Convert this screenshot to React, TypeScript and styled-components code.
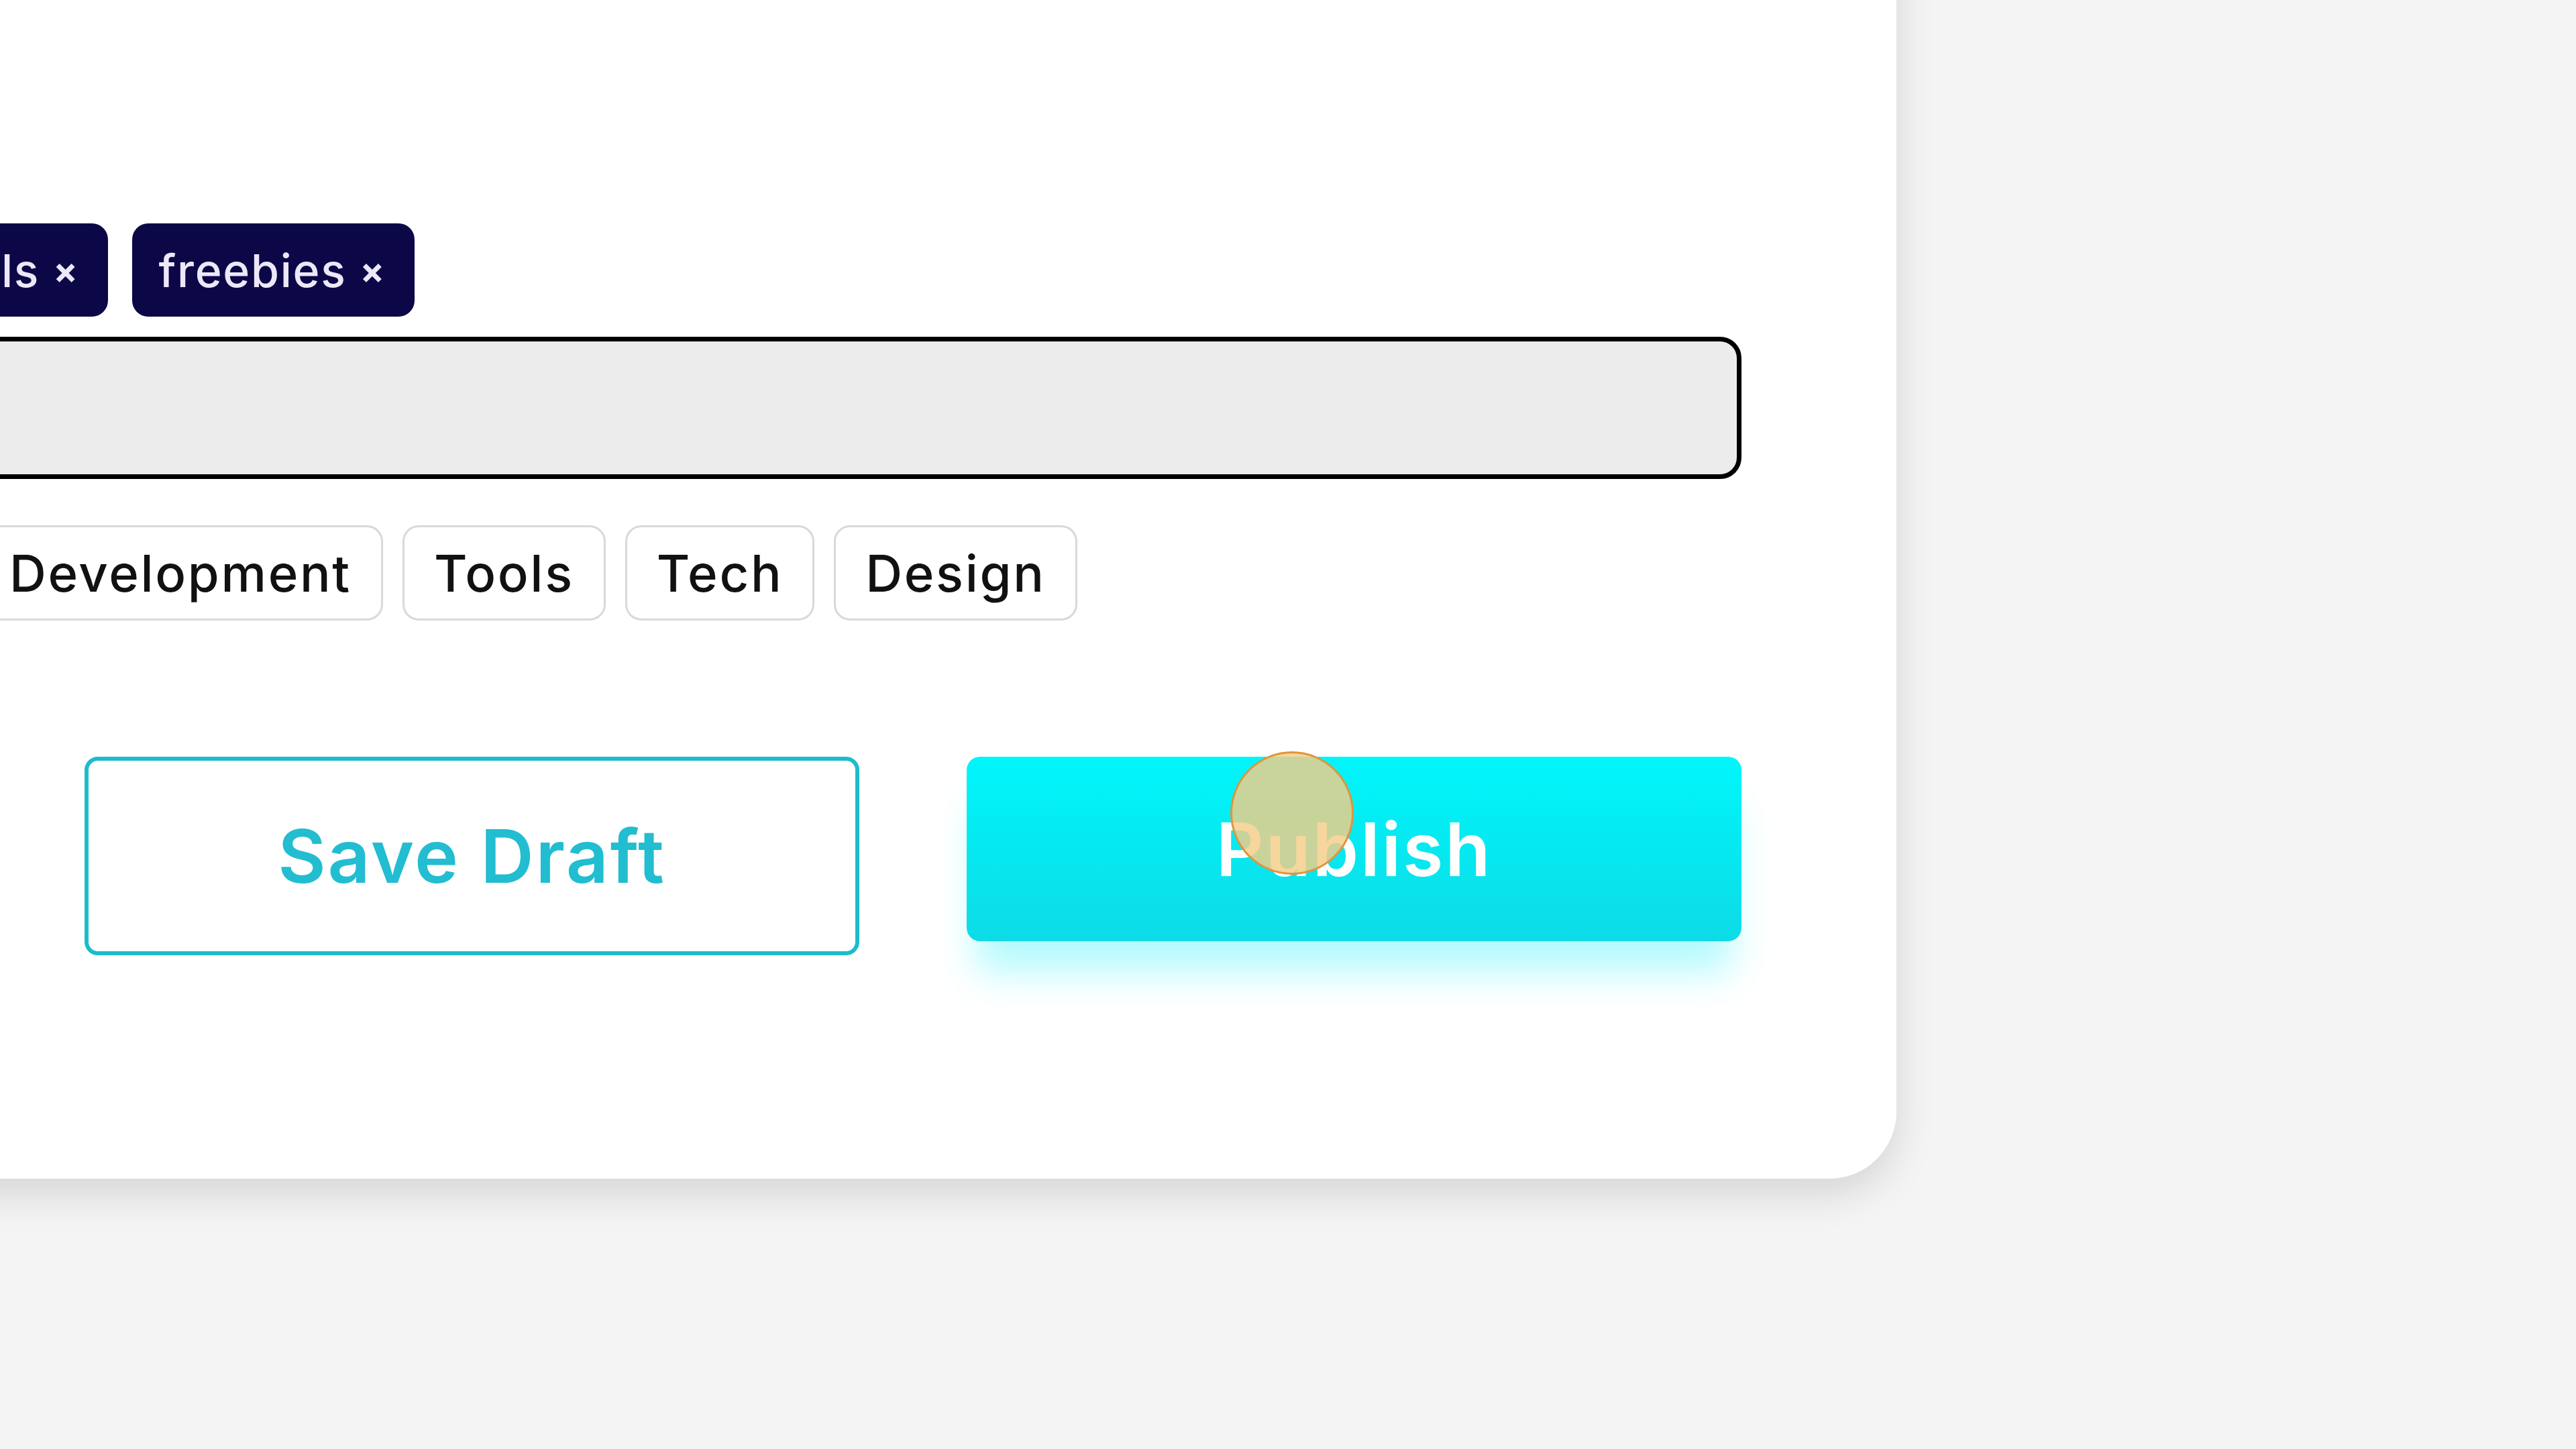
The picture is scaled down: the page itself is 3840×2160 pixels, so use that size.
import React from "react";
import styled, { createGlobalStyle } from "styled-components";

const GlobalStyle = createGlobalStyle`
  html, body {
    margin: 0;
    padding: 0;
    background: #f4f4f4;
    font-family: Inter, "Liberation Sans", sans-serif;
  }
  * {
    box-sizing: border-box;
  }
`;

const Page = styled.main`
  width: 3840px;
  height: 2160px;
  overflow: hidden;
  display: flex;
  align-items: flex-start;
`;

const Card = styled.section`
  margin-left: -400px;
  margin-top: -200px;
  width: 3227px;
  padding: 533px 231px 333px 172px;
  background: #ffffff;
  border-radius: 100px;
  box-shadow: 0 22px 60px rgba(0, 0, 0, 0.13);
  display: flex;
  flex-direction: column;
`;

const ChipRow = styled.div`
  display: flex;
  gap: 36px;
  height: 139px;
`;

const Chip = styled.span`
  display: inline-flex;
  align-items: center;
  gap: 20px;
  height: 139px;
  padding: 0 43px 0 40px;
  border-radius: 24px;
  background: #0c0848;
  color: #ece8f8;
  font-size: 68px;
  font-weight: 500;
  letter-spacing: 0.025em;
  white-space: nowrap;
`;

const ChipClose = styled.span`
  font-size: 54px;
  font-weight: 700;
  line-height: 1;
`;

const TagInput = styled.input`
  margin-top: 30px;
  height: 212px;
  width: 100%;
  border: 7px solid #000000;
  border-radius: 32px;
  background: #ececec;
  outline: none;
`;

const SuggestRow = styled.div`
  display: flex;
  gap: 29px;
  margin-top: 69px;
`;

const Suggestion = styled.button`
  height: 142px;
  padding: 0 44px;
  border: 3px solid #d9d9d9;
  border-radius: 24px;
  background: #ffffff;
  color: #111111;
  font-family: Inter, "Liberation Sans", sans-serif;
  font-size: 76px;
  font-weight: 500;
  letter-spacing: 0.035em;
  white-space: nowrap;
`;

const ActionRow = styled.div`
  display: flex;
  justify-content: flex-end;
  align-items: flex-start;
  gap: 160px;
  margin-top: 203px;
`;

const ActionButton = styled.button<{ $primary?: boolean }>`
  position: relative;
  width: 1155px;
  height: ${({ $primary }) => ($primary ? "275px" : "296px")};
  border-radius: 20px;
  font-family: Inter, "Liberation Sans", sans-serif;
  font-size: 110px;
  font-weight: 600;
  letter-spacing: 0.025em;
  border: ${({ $primary }) => ($primary ? "none" : "6px solid #1cbccc")};
  background: ${({ $primary }) =>
    $primary ? "linear-gradient(180deg, #00f6fb 0%, #0ddbe6 100%)" : "#ffffff"};
  color: ${({ $primary }) => ($primary ? "#ffffff" : "#22bdd0")};
  box-shadow: ${({ $primary }) =>
    $primary ? "0 60px 55px -15px rgba(0, 240, 250, 0.3)" : "none"};
`;

const TouchMark = styled.span`
  position: absolute;
  left: 393px;
  top: -8px;
  width: 184px;
  height: 184px;
  border-radius: 50%;
  background: rgba(244, 205, 134, 0.82);
  border: 3px solid #e0953a;
  pointer-events: none;
`;

const chips = ["Visuals", "freebies"];
const suggestions = ["Web Development", "Tools", "Tech", "Design"];

export default function App() {
  return (
    <>
      <GlobalStyle />
      <Page>
        <Card>
          <ChipRow>
            {chips.map((c) => (
              <Chip key={c}>
                {c}
                <ChipClose>×</ChipClose>
              </Chip>
            ))}
          </ChipRow>
          <TagInput />
          <SuggestRow>
            {suggestions.map((s) => (
              <Suggestion key={s}>{s}</Suggestion>
            ))}
          </SuggestRow>
          <ActionRow>
            <ActionButton>Save Draft</ActionButton>
            <ActionButton $primary>
              Publish
              <TouchMark />
            </ActionButton>
          </ActionRow>
        </Card>
      </Page>
    </>
  );
}
